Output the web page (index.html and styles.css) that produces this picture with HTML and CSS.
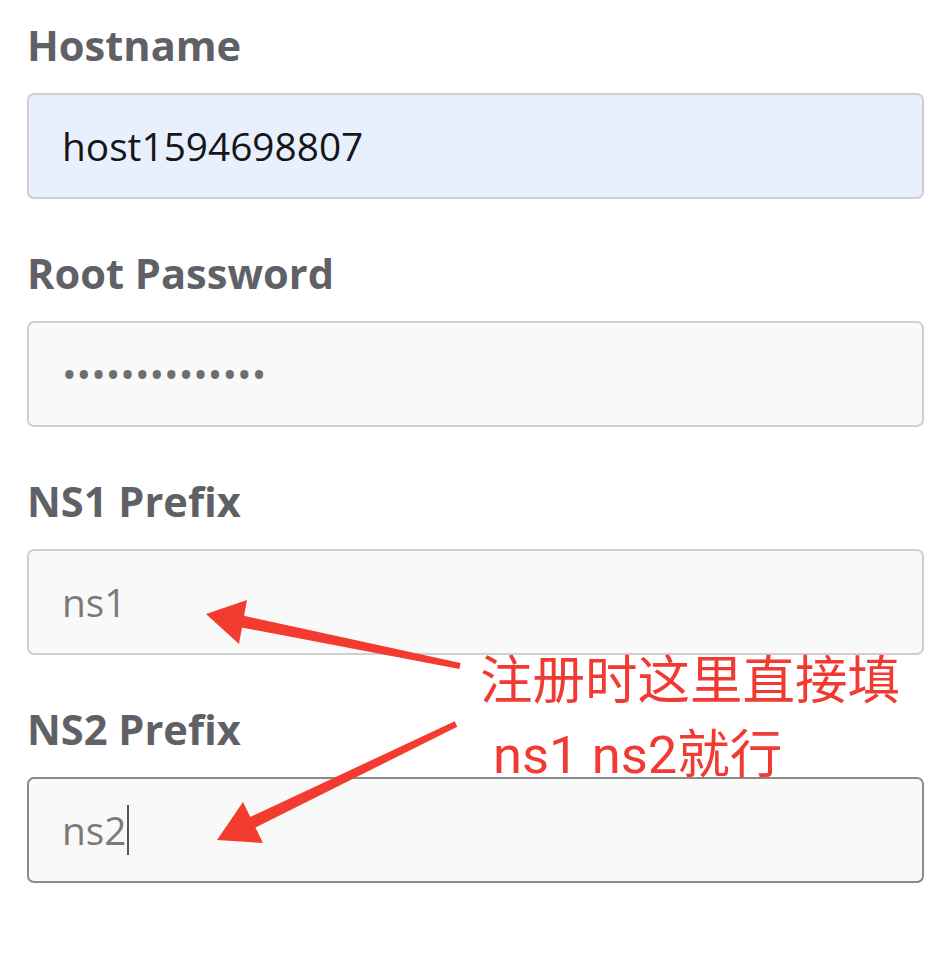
FILE: index.html
```html
<!DOCTYPE html>
<html lang="zh">
<head>
<meta charset="utf-8">
<title>Server settings</title>
<link rel="stylesheet" href="styles.css">
</head>
<body>
<main class="form">
  <div class="field">
    <div class="label">Hostname</div>
    <div class="box box-autofill"><span class="val val-dark">host1594698807</span></div>
  </div>
  <div class="field">
    <div class="label">Root Password</div>
    <div class="box"><span class="val val-dots">••••••••••••••</span></div>
  </div>
  <div class="field">
    <div class="label">NS1 Prefix</div>
    <div class="box"><span class="val val-grey">ns1</span></div>
  </div>
  <div class="field">
    <div class="label">NS2 Prefix</div>
    <div class="box box-focus"><span class="val val-grey">ns2</span><span class="caret"></span></div>
  </div>
</main>
<div class="note">注册时这里直接填
 ns1 ns2就行</div>
<svg class="arrows" width="948" height="957" viewBox="0 0 948 957">
  <g fill="#f33b30">
    <polygon points="206,614 247,600 239,644"/>
    <polygon points="233.8,625.9 236.2,614.1 460.6,663.1 459.4,668.9"/>
    <polygon points="217,840 243,802 263,843"/>
    <polygon points="247.6,831.4 242.4,820.6 454.7,721.3 457.3,726.7"/>
  </g>
</svg>
</body>
</html>
```
FILE: styles.css
```css
html, body {
  margin: 0;
  padding: 0;
  background: #ffffff;
}
body {
  position: relative;
  width: 948px;
  height: 957px;
  overflow: hidden;
}
.form {
  display: flex;
  flex-direction: column;
  gap: 46px;
  padding: 17px 24px 0 27px;
  font-family: "Open Sans", "Noto Sans", sans-serif;
}
.field {
  display: flex;
  flex-direction: column;
  gap: 19px;
}
.label {
  font-size: 41.6px;
  line-height: 57px;
  font-weight: 700;
  color: #5f6166;
}
.box {
  box-sizing: border-box;
  height: 106px;
  border: 2px solid #cfcfcf;
  border-radius: 7px;
  background: #f9f9f9;
  display: flex;
  align-items: center;
  padding-left: 33px;
}
.box-autofill {
  background: #e8f0fe;
}
.box-focus {
  border-color: #8a8a8a;
}
.val {
  font-size: 38.8px;
  line-height: 52px;
}
.val-dark { color: #161616; }
.val-grey { color: #7a7a7a; }
.val-dots {
  color: #6e6e6e;
}
.caret {
  display: inline-block;
  width: 2px;
  height: 50px;
  background: #555;
  margin-left: 1px;
}
.note {
  position: absolute;
  left: 480px;
  top: 644px;
  white-space: pre;
  font-family: Roboto, "Noto Sans CJK SC", sans-serif;
  font-size: 52.5px;
  line-height: 74px;
  color: #f13a32;
}
.arrows {
  position: absolute;
  left: 0;
  top: 0;
}
```
